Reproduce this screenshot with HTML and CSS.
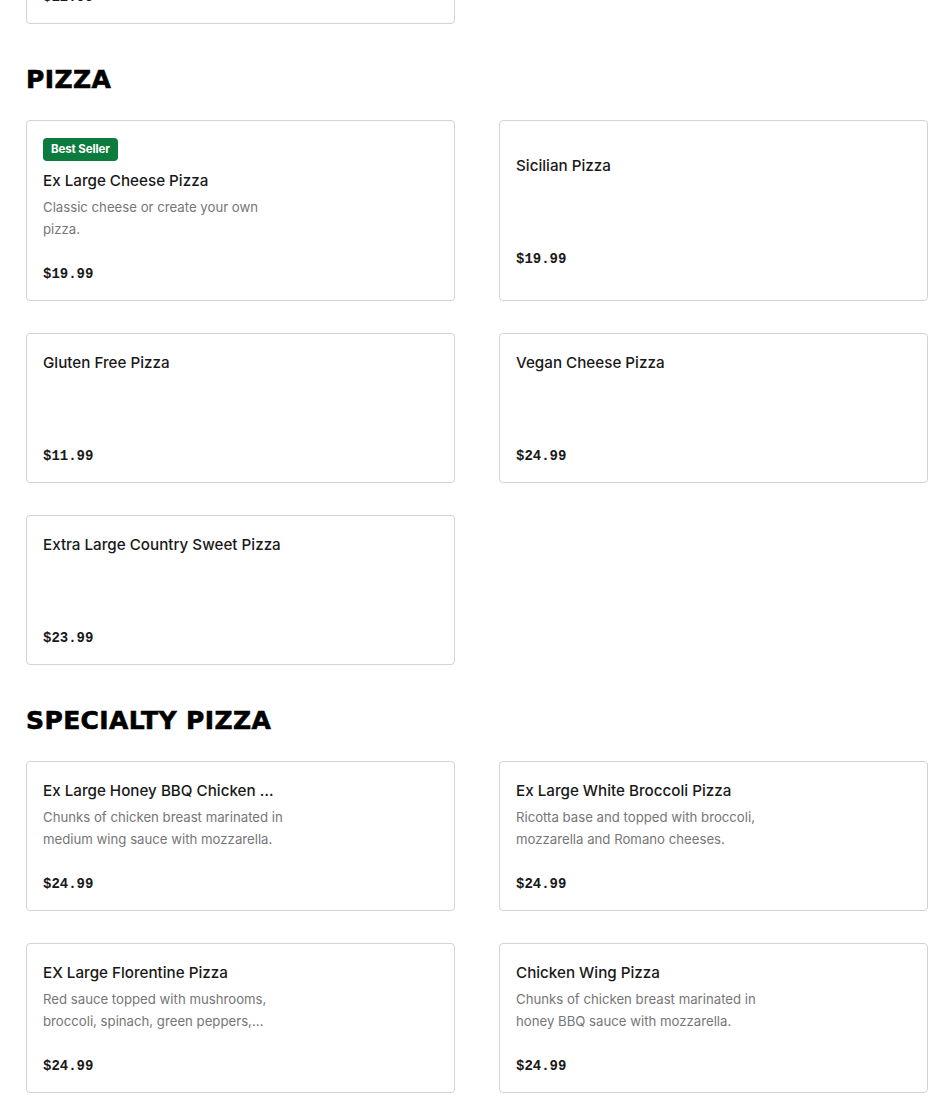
FILE: index.html
```html
<!DOCTYPE html>
<html lang="en">
<head>
<meta charset="utf-8">
<title>Menu</title>
<link rel="stylesheet" href="styles.css">
</head>
<body>
<main class="menu">
  <section class="section section-prev">
    <div class="grid">
      <article class="card">
        <h3 class="item-name">Garlic Knots</h3>
        <p class="item-desc"></p>
        <span class="price">$12.99</span>
      </article>
    </div>
  </section>

  <section class="section">
    <h2 class="section-title">PIZZA</h2>
    <div class="grid">
      <article class="card">
        <span class="badge">Best Seller</span>
        <h3 class="item-name">Ex Large Cheese Pizza</h3>
        <p class="item-desc">Classic cheese or create your own pizza.</p>
        <span class="price">$19.99</span>
      </article>
      <article class="card">
        <h3 class="item-name">Sicilian Pizza</h3>
        <p class="item-desc"></p>
        <span class="price">$19.99</span>
      </article>
      <article class="card">
        <h3 class="item-name">Gluten Free Pizza</h3>
        <p class="item-desc"></p>
        <span class="price">$11.99</span>
      </article>
      <article class="card">
        <h3 class="item-name">Vegan Cheese Pizza</h3>
        <p class="item-desc"></p>
        <span class="price">$24.99</span>
      </article>
      <article class="card">
        <h3 class="item-name">Extra Large Country Sweet Pizza</h3>
        <p class="item-desc"></p>
        <span class="price">$23.99</span>
      </article>
    </div>
  </section>

  <section class="section">
    <h2 class="section-title">SPECIALTY PIZZA</h2>
    <div class="grid">
      <article class="card">
        <h3 class="item-name">Ex Large Honey BBQ Chicken Pizza</h3>
        <p class="item-desc">Chunks of chicken breast marinated in medium wing sauce with mozzarella.</p>
        <span class="price">$24.99</span>
      </article>
      <article class="card">
        <h3 class="item-name">Ex Large White Broccoli Pizza</h3>
        <p class="item-desc">Ricotta base and topped with broccoli, mozzarella and Romano cheeses.</p>
        <span class="price">$24.99</span>
      </article>
      <article class="card">
        <h3 class="item-name">EX Large Florentine Pizza</h3>
        <p class="item-desc">Red sauce topped with mushrooms, broccoli, spinach, green peppers, tomatoes and garlic.</p>
        <span class="price">$24.99</span>
      </article>
      <article class="card">
        <h3 class="item-name">Chicken Wing Pizza</h3>
        <p class="item-desc">Chunks of chicken breast marinated in honey BBQ sauce with mozzarella.</p>
        <span class="price">$24.99</span>
      </article>
    </div>
  </section>
</main>
</body>
</html>
```

FILE: styles.css
```css
html, body {
  margin: 0;
  padding: 0;
  background: #ffffff;
}

body {
  font-family: Inter, "Noto Sans", "Liberation Sans", sans-serif;
  color: #191919;
}

.menu {
  padding: 0 22px 0 26px;
  margin-top: -126px;
}

.section {
  margin-top: 40px;
}

.section-prev {
  margin-top: 0;
}

.section-title {
  margin: 0 0 24px;
  font-family: "DejaVu Sans", sans-serif;
  font-weight: 700;
  font-size: 25px;
  line-height: 32px;
  color: #000000;
  letter-spacing: 0.4px;
  -webkit-text-stroke: 0.6px #000000;
}

.grid {
  display: grid;
  grid-template-columns: 429px 429px;
  column-gap: 44px;
  row-gap: 32px;
}

.card {
  box-sizing: border-box;
  border: 1px solid #d3d3d3;
  border-radius: 4px;
  background: #ffffff;
  padding: 17px 16px 16px;
  display: flex;
  flex-direction: column;
  justify-content: center;
  align-items: flex-start;
}

.badge {
  display: inline-block;
  background: #0b7b3e;
  color: #ffffff;
  font-size: 11.5px;
  font-weight: 700;
  line-height: 23px;
  height: 23px;
  padding: 0 8px;
  border-radius: 4px;
  margin-bottom: 8px;
  letter-spacing: -0.1px;
}

.item-name {
  margin: 0;
  max-width: 238px;
  font-size: 15.2px;
  font-weight: 500;
  line-height: 24px;
  color: #191919;
  white-space: nowrap;
  overflow: hidden;
  text-overflow: ellipsis;
}

.item-desc {
  margin: 3px 0 0;
  max-width: 250px;
  min-height: 44px;
  font-size: 13.2px;
  line-height: 22px;
  color: #767676;
  display: -webkit-box;
  -webkit-line-clamp: 2;
  -webkit-box-orient: vertical;
  overflow: hidden;
}

.price {
  margin-top: 24px;
  font-family: "Liberation Mono", "DejaVu Sans Mono", monospace;
  font-size: 14px;
  font-weight: 700;
  line-height: 20px;
  color: #191919;
}
```
